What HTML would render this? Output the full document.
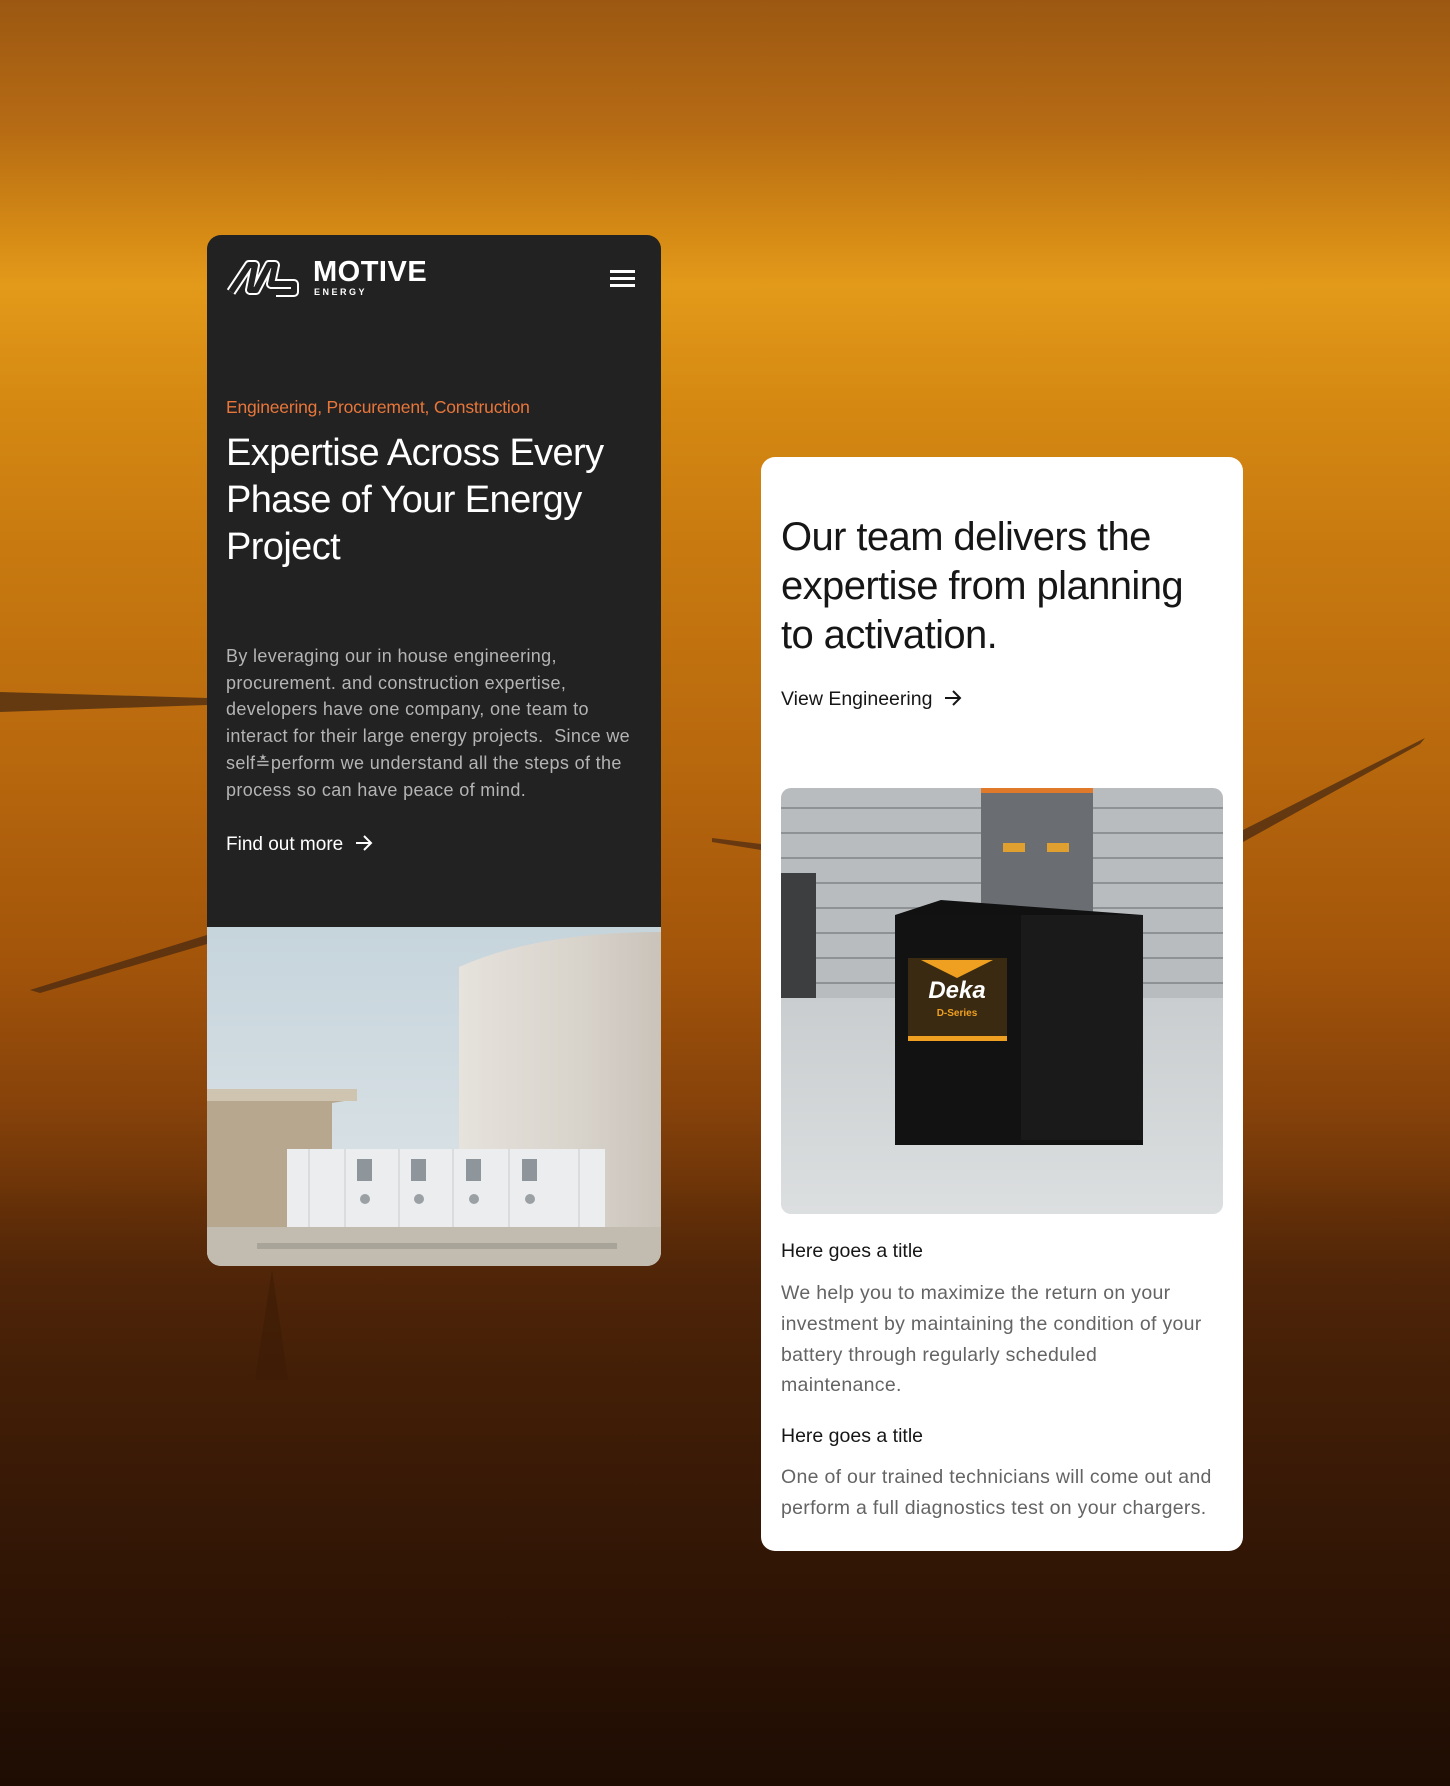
<!DOCTYPE html>
<html><head><meta charset="utf-8"><style>
*{margin:0;padding:0;box-sizing:border-box}
html,body{width:1450px;height:1786px;overflow:hidden}
body{position:relative;font-family:"Liberation Sans",sans-serif;
background:linear-gradient(180deg,#9c5812 0%,#b56a14 7%,#d58a15 13%,#e39a1a 16%,#d68a12 22%,#c97b10 30%,#b9690d 42%,#a2540a 54%,#86420a 62%,#653008 68%,#4a2206 76%,#361805 86%,#231004 100%)}
.card{position:absolute;border-radius:14px;overflow:hidden}
.dark{left:207px;top:235px;width:454px;height:1031px;background:#222222}
.white{left:761px;top:457px;width:482px;height:1094px;background:#fff}
.arr{display:inline-block;vertical-align:middle;margin-left:12px;margin-top:-4px}
</style></head><body>
<svg style="position:absolute;left:0;top:0" width="1450" height="1786">
<defs><linearGradient id="tree" x1="0" y1="0" x2="0" y2="1"><stop offset="0" stop-color="#5a2a08" stop-opacity="0"/><stop offset=".15" stop-color="#4a2208" stop-opacity=".6"/><stop offset="1" stop-color="#1e0c03"/></linearGradient></defs>
<path d="M0 692 L207 698 L207 705 L0 712 Z" fill="#4a2a12" opacity=".75"/>
<path d="M30 990 L207 935 L207 944 L40 993 Z" fill="#4a2a12" opacity=".75"/>
<path d="M712 838 L761 844 L761 850 L712 842 Z" fill="#4a2a12" opacity=".7"/>
<path d="M1243 830 L1425 738 L1420 744 L1243 842 Z" fill="#4a2a12" opacity=".75"/>
<path d="M0 1190 L200 1180 L300 1190 L700 1180 L1000 1190 L1450 1180 L1450 1786 L0 1786 Z" fill="url(#tree)"/>
<path d="M255 1380 L272 1270 L288 1380 Z" fill="#3a1a06" opacity=".5"/>
</svg>

<div class="card dark">
  <svg style="position:absolute;left:13px;top:15px" width="90" height="60" viewBox="0 0 90 60">
    <g fill="none" stroke-linejoin="round">
      <path d="M11 42 L29 15 L35 15 L30 40 L36 40 L49 15 L55 15 L51 34 L74 34 L74 42 L56 42" stroke="#fff" stroke-width="10"/>
      <path d="M11 42 L29 15 L35 15 L30 40 L36 40 L49 15 L55 15 L51 34 L74 34 L74 42 L56 42" stroke="#222" stroke-width="6"/>
    </g>
  </svg>
  <div style="position:absolute;left:106px;top:21px;color:#fff;font-size:29px;font-weight:bold;letter-spacing:.5px">MOTIVE</div>
  <div style="position:absolute;left:107px;top:52px;color:#fff;font-size:9px;font-weight:bold;letter-spacing:2.5px">ENERGY</div>
  <div style="position:absolute;left:403px;top:35px;width:25px;height:2.5px;background:#fff;box-shadow:0 7px 0 #fff,0 14px 0 #fff"></div>
  <div style="position:absolute;left:19px;top:162px;color:#e8763a;font-size:17.5px;letter-spacing:-.2px;white-space:nowrap">Engineering, Procurement, Construction</div>
  <div style="position:absolute;left:19px;top:195px;color:#fff;font-size:38px;line-height:47px;letter-spacing:-.6px;white-space:nowrap">Expertise Across Every<br>Phase of Your Energy<br>Project</div>
  <div style="position:absolute;left:19px;top:408px;color:#b4b4b4;font-size:18px;line-height:26.7px;letter-spacing:.35px;white-space:nowrap">By leveraging our in house engineering,<br>procurement. and construction expertise,<br>developers have one company, one team to<br>interact for their large energy projects.&nbsp; Since we<br>self≛perform we understand all the steps of the<br>process so can have peace of mind.</div>
  <div style="position:absolute;left:19px;top:599px;color:#fff;font-size:19px">Find out more<svg class="arr" width="18" height="16" viewBox="0 0 18 16"><path d="M1 8 H16 M9 1 L16 8 L9 15" fill="none" stroke="#fff" stroke-width="2"/></svg></div>
  <svg style="position:absolute;left:0;top:692px" width="454" height="339" viewBox="0 0 454 339">
    <defs><linearGradient id="sky" x1="0" y1="0" x2="0" y2="1"><stop offset="0" stop-color="#c6d4dc"/><stop offset="1" stop-color="#dfe6e8"/></linearGradient>
    <linearGradient id="tank" x1="0" y1="0" x2="1" y2="0"><stop offset="0" stop-color="#e6e2dc"/><stop offset=".6" stop-color="#d8d3cb"/><stop offset="1" stop-color="#c9c3ba"/></linearGradient></defs>
    <rect width="454" height="339" fill="url(#sky)"/>
    <path d="M252 40 Q330 5 454 5 L454 300 L252 300 Z" fill="url(#tank)"/>
    <path d="M0 165 L150 162 L150 172 L125 176 L125 300 L0 300 Z" fill="#b7a78e"/>
    <rect x="0" y="162" width="150" height="12" fill="#cfc4b0"/>
    <rect x="80" y="222" width="318" height="95" fill="#ecedef"/>
    <g fill="#8e969b"><rect x="150" y="232" width="15" height="22"/><rect x="204" y="232" width="15" height="22"/><rect x="259" y="232" width="15" height="22"/><rect x="315" y="232" width="15" height="22"/></g>
    <g fill="#9aa0a4"><circle cx="158" cy="272" r="5"/><circle cx="212" cy="272" r="5"/><circle cx="267" cy="272" r="5"/><circle cx="323" cy="272" r="5"/></g>
    <g stroke="#c8cacc"><line x1="102" y1="222" x2="102" y2="317"/><line x1="138" y1="222" x2="138" y2="317"/><line x1="192" y1="222" x2="192" y2="317"/><line x1="246" y1="222" x2="246" y2="317"/><line x1="302" y1="222" x2="302" y2="317"/><line x1="372" y1="222" x2="372" y2="317"/></g>
    <path d="M0 300 L454 300 L454 339 L0 339 Z" fill="#c2bcb0"/>
    <rect x="50" y="316" width="360" height="6" fill="#a9a499"/>
  </svg>
</div>

<div class="card white">
  <div style="position:absolute;left:20px;top:56px;color:#161616;font-size:40px;line-height:49px;letter-spacing:-.6px;white-space:nowrap">Our team delivers the<br>expertise from planning<br>to activation.</div>
  <div style="position:absolute;left:20px;top:231px;color:#161616;font-size:19.5px">View Engineering<svg class="arr" width="18" height="16" viewBox="0 0 18 16"><path d="M1 8 H16 M9 1 L16 8 L9 15" fill="none" stroke="#161616" stroke-width="2"/></svg></div>
  <svg style="position:absolute;left:20px;top:331px;border-radius:10px" width="442" height="426" viewBox="0 0 442 426">
    <defs><linearGradient id="floor" x1="0" y1="0" x2="0" y2="1"><stop offset="0" stop-color="#c9cdcf"/><stop offset="1" stop-color="#dcdfe0"/></linearGradient></defs>
    <rect width="442" height="210" fill="#b9bcbe"/>
    <g stroke="#8e9294" stroke-width="2">
      <line x1="0" y1="20" x2="442" y2="20"/><line x1="0" y1="45" x2="442" y2="45"/><line x1="0" y1="70" x2="442" y2="70"/><line x1="0" y1="95" x2="442" y2="95"/><line x1="0" y1="120" x2="442" y2="120"/><line x1="0" y1="145" x2="442" y2="145"/><line x1="0" y1="170" x2="442" y2="170"/><line x1="0" y1="195" x2="442" y2="195"/>
    </g>
    <rect x="200" y="0" width="112" height="130" fill="#6a6e72"/>
    <rect x="200" y="0" width="112" height="5" fill="#e07a2a"/>
    <rect x="222" y="55" width="22" height="9" fill="#e0a030"/><rect x="266" y="55" width="22" height="9" fill="#e0a030"/>
    <rect x="0" y="85" width="35" height="130" fill="#3c3e40"/>
    <rect y="210" width="442" height="216" fill="url(#floor)"/>
    <path d="M114 127 L160 112 L362 127 L362 350 L114 357 Z" fill="#111"/>
    <rect x="114" y="127" width="248" height="230" fill="#121212"/>
    <rect x="240" y="127" width="122" height="225" fill="#1a1a1a"/>
    <rect x="127" y="170" width="99" height="83" fill="#3b2a12"/>
    <path d="M140 172 L176 190 L212 172 Z" fill="#f0a020"/>
    <text x="176" y="210" text-anchor="middle" font-family="Liberation Sans" font-weight="bold" font-style="italic" font-size="24" fill="#fff">Deka</text>
    <text x="176" y="228" text-anchor="middle" font-family="Liberation Sans" font-weight="bold" font-size="10" fill="#f0a020">D-Series</text>
    <rect x="127" y="248" width="99" height="5" fill="#f0a020"/>
  </svg>
  <div style="position:absolute;left:20px;top:783px;color:#161616;font-size:19.5px">Here goes a title</div>
  <div style="position:absolute;left:20px;top:821px;color:#646464;font-size:19.5px;line-height:30.8px;letter-spacing:.3px;white-space:nowrap">We help you to maximize the return on your<br>investment by maintaining the condition of your<br>battery through regularly scheduled<br>maintenance.</div>
  <div style="position:absolute;left:20px;top:968px;color:#161616;font-size:19.5px">Here goes a title</div>
  <div style="position:absolute;left:20px;top:1005px;color:#646464;font-size:19.5px;line-height:30.8px;letter-spacing:.3px;white-space:nowrap">One of our trained technicians will come out and<br>perform a full diagnostics test on your chargers.</div>
</div>
</body></html>
